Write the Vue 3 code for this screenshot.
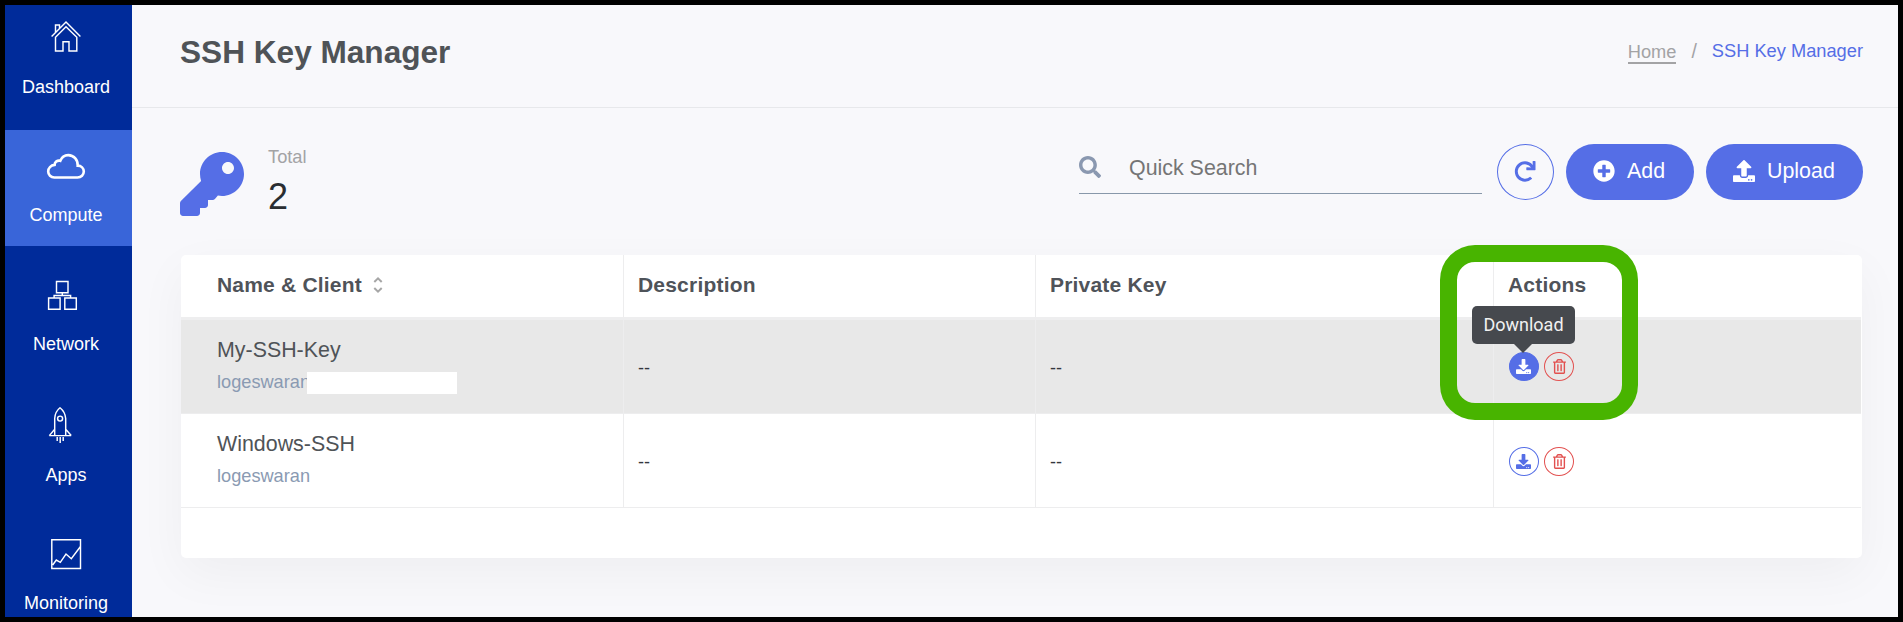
<script setup>
const nav = [
  { id: 'dashboard', label: 'Dashboard' },
  { id: 'compute', label: 'Compute' },
  { id: 'network', label: 'Network' },
  { id: 'apps', label: 'Apps' },
  { id: 'monitoring', label: 'Monitoring' },
]

const keys = [
  { name: 'My-SSH-Key', client: 'logeswaran', description: '--', privateKey: '--', hovered: true },
  { name: 'Windows-SSH', client: 'logeswaran', description: '--', privateKey: '--', hovered: false },
]

const icons = {
  key: 'M512 176.001C512 273.203 433.202 352 336 352c-11.22 0-22.19-1.062-32.827-3.069l-24.012 27.014A23.999 23.999 0 0 1 261.223 384H224v40c0 13.255-10.745 24-24 24h-40v40c0 13.255-10.745 24-24 24H24c-13.255 0-24-10.745-24-24v-78.059c0-6.365 2.529-12.47 7.029-16.971l161.802-161.802C163.108 213.814 160 195.271 160 176 160 78.798 238.797.001 335.999 0 433.488-.001 512 78.511 512 176.001zM336 128c0 26.51 21.49 48 48 48s48-21.49 48-48-21.49-48-48-48-48 21.49-48 48z',
  search: 'M505 442.7L405.3 343c-4.5-4.5-10.6-7-17-7H372c27.6-35.3 44-79.7 44-128C416 93.1 322.9 0 208 0S0 93.1 0 208s93.1 208 208 208c48.3 0 92.7-16.4 128-44v16.3c0 6.4 2.5 12.5 7 17l99.7 99.7c9.4 9.4 24.6 9.4 33.9 0l28.3-28.3c9.4-9.4 9.4-24.6.1-34zM208 336c-70.7 0-128-57.2-128-128 0-70.7 57.2-128 128-128 70.7 0 128 57.2 128 128 0 70.7-57.2 128-128 128z',
  plus: 'M256 8C119 8 8 119 8 256s111 248 248 248 248-111 248-248S393 8 256 8zm144 276c0 6.6-5.4 12-12 12h-92v92c0 6.6-5.4 12-12 12h-56c-6.6 0-12-5.4-12-12v-92h-92c-6.6 0-12-5.4-12-12v-56c0-6.6 5.4-12 12-12h92v-92c0-6.6 5.4-12 12-12h56c6.6 0 12 5.4 12 12v92h92c6.6 0 12 5.4 12 12v56z',
  upload: 'M296 384h-80c-13.3 0-24-10.7-24-24V192h-87.7c-17.8 0-26.7-21.5-14.1-34.1L242.3 5.7c7.5-7.5 19.8-7.5 27.3 0l152.2 152.2c12.6 12.6 3.7 34.1-14.1 34.1H320v168c0 13.3-10.7 24-24 24zm216-8v112c0 13.3-10.7 24-24 24H24c-13.3 0-24-10.7-24-24V376c0-13.3 10.7-24 24-24h136v8c0 30.9 25.1 56 56 56h80c30.9 0 56-25.1 56-56v-8h136c13.3 0 24 10.7 24 24zm-124 88c0-11-9-20-20-20s-20 9-20 20 9 20 20 20 20-9 20-20zm64 0c0-11-9-20-20-20s-20 9-20 20 9 20 20 20 20-9 20-20z',
  download: 'M216 0h80c13.3 0 24 10.7 24 24v168h87.7c17.8 0 26.7 21.5 14.1 34.1L269.7 378.3c-7.5 7.5-19.8 7.5-27.3 0L90.1 226.1c-12.6-12.6-3.7-34.1 14.1-34.1H192V24c0-13.3 10.7-24 24-24zm296 376v112c0 13.3-10.7 24-24 24H24c-13.3 0-24-10.7-24-24V376c0-13.3 10.7-24 24-24h146.7l49 49c20.1 20.1 52.5 20.1 72.6 0l49-49H488c13.3 0 24 10.7 24 24zm-124 88c0-11-9-20-20-20s-20 9-20 20 9 20 20 20 20-9 20-20zm64 0c0-11-9-20-20-20s-20 9-20 20 9 20 20 20 20-9 20-20z',
  redo: 'M500.33 0h-47.41a12 12 0 0 0-12 12.57l4 82.76A247.42 247.42 0 0 0 256 8C119.34 8 7.9 119.53 8 256.19 8.1 393.07 119.1 504 256 504a247.1 247.1 0 0 0 166.18-63.91 12 12 0 0 0 .48-17.43l-34-34a12 12 0 0 0-16.38-.55A176 176 0 1 1 402.1 157.8l-101.53-4.87a12 12 0 0 0-12.57 12v47.41a12 12 0 0 0 12 12h200.33a12 12 0 0 0 12-12V12a12 12 0 0 0-12-12z',
  trash: 'M268 416h24a12 12 0 0 0 12-12V188a12 12 0 0 0-12-12h-24a12 12 0 0 0-12 12v216a12 12 0 0 0 12 12zM432 80h-82.41l-34-56.7A48 48 0 0 0 274.41 0H173.59a48 48 0 0 0-41.16 23.3L98.41 80H16A16 16 0 0 0 0 96v16a16 16 0 0 0 16 16h16v336a48 48 0 0 0 48 48h288a48 48 0 0 0 48-48V128h16a16 16 0 0 0 16-16V96a16 16 0 0 0-16-16zM171.84 50.91A6 6 0 0 1 177 48h94a6 6 0 0 1 5.15 2.91L293.61 80H154.39zM368 464H80V128h288zm-212-48h24a12 12 0 0 0 12-12V188a12 12 0 0 0-12-12h-24a12 12 0 0 0-12 12v216a12 12 0 0 0 12 12z',
}
</script>

<template>
  <div class="app">
    <nav class="sidebar">
      <a v-for="item in nav" :key="item.id" class="nav-item" :class="item.id">
        <svg class="nav-icon" viewBox="0 0 40 40">
          <g v-if="item.id === 'dashboard'">
            <path d="M5.6 18.4 20 4 34.4 18.4M9.5 14.5V7h4v3.8M9.5 19.2V33h7.5V23.8h6V33h7.8V19.2L20 8.8Z" />
          </g>
          <g v-else-if="item.id === 'compute'" class="thick">
            <path d="M8.3 32.5H31.5C35.2 32.5 37.8 29.8 37.8 26.6C37.8 23.2 35.2 20.6 31.7 20.6C31.9 14.8 27.8 10.1 22.2 10.1C18.3 10.1 15.7 12.2 14.3 15.8C11.5 14.9 8.6 17 8.6 19.9C4.8 20.4 2.2 23.1 2.2 26.4C2.2 29.8 4.9 32.5 8.3 32.5Z" />
          </g>
          <g v-else-if="item.id === 'network'">
            <path d="M10.5 6.5h11.5v11.2h-11.5zM2.6 23h11.5v11.3H2.6zM18.8 23h11.5v11.3H18.8zM16.3 17.7v2.8M8.1 23v-2.5h16.5V23" />
          </g>
          <g v-else-if="item.id === 'apps'">
            <path d="M8.7 29.6V12.5C9 7.8 11.2 4 14 1.8C16.8 4 19.3 7.8 19.7 12.5V29.6M3.3 29.6H25.2M8.7 23.3 3.3 29.6M19.7 23.3l5.5 6.3M11.2 31v4M14.2 31v6M17.2 31v4" />
            <circle cx="14.1" cy="12.6" r="2.5" />
          </g>
          <g v-else>
            <path d="M5.8 5.8h28.7v28.6H5.8zM6.7 31 10.3 26 14.3 28.3 20 20 25.3 24.7 34.3 12.7" />
          </g>
        </svg>
        <span class="nav-label">{{ item.label }}</span>
      </a>
    </nav>

    <main class="main">
      <header class="header">
        <h1>SSH Key Manager</h1>
        <div class="crumbs">
          <a class="home">Home</a>
          <span class="slash">/</span>
          <span class="here">SSH Key Manager</span>
        </div>
      </header>

      <section class="toolbar">
        <svg class="key" viewBox="0 0 512 512"><path :d="icons.key" /></svg>
        <div class="total">
          <span class="total-label">Total</span>
          <span class="total-value">2</span>
        </div>
        <div class="search">
          <svg viewBox="0 0 512 512"><path :d="icons.search" /></svg>
          <span>Quick Search</span>
        </div>
        <button class="refresh"><svg viewBox="0 0 512 512"><path :d="icons.redo" /></svg></button>
        <button class="pill add"><svg viewBox="0 0 512 512"><path :d="icons.plus" /></svg>Add</button>
        <button class="pill upload"><svg viewBox="0 0 512 512"><path :d="icons.upload" /></svg>Upload</button>
      </section>

      <section class="card">
        <div class="row head">
          <div class="cell first">
            Name &amp; Client
            <svg class="sort" viewBox="0 0 10 16"><path d="M1.3 5 5 1.4 8.7 5M1.3 11 5 14.6 8.7 11" /></svg>
          </div>
          <div class="cell">Description</div>
          <div class="cell">Private Key</div>
          <div class="cell">Actions</div>
        </div>
        <div v-for="k in keys" :key="k.name" class="row body" :class="{ hovered: k.hovered }">
          <div class="cell first names">
            <span class="name">{{ k.name }}</span>
            <span class="client">{{ k.client }}<i v-if="k.hovered" class="mask"></i></span>
          </div>
          <div class="cell dash">{{ k.description }}</div>
          <div class="cell dash">{{ k.privateKey }}</div>
          <div class="cell actions">
            <button class="round blue">
              <svg viewBox="0 0 512 512"><path :d="icons.download" /></svg>
              <span v-if="k.hovered" class="tooltip">Download</span>
            </button>
            <button class="round red">
              <svg viewBox="0 0 448 512"><path :d="icons.trash" /></svg>
            </button>
            <i v-if="k.hovered" class="highlight"></i>
          </div>
        </div>
      </section>
    </main>
  </div>
</template>

<style>
body {
  margin: 0;
  overflow: hidden;
}
</style>

<style scoped>
.app {
  box-sizing: border-box;
  width: 1903px;
  height: 622px;
  border: 5px solid #000;
  display: flex;
  overflow: hidden;
  background: #f8f8fb;
  font-family: "Liberation Sans", Arial, sans-serif;
  font-size: 18px;
  color: #495057;
}
button {
  box-sizing: border-box;
  margin: 0;
  padding: 0;
  font-family: inherit;
}
svg {
  display: block;
  flex: none;
  fill: currentColor;
}

.sidebar {
  width: 127px;
  height: 612px;
  flex: none;
  overflow: hidden;
  background: #002b9a;
}
.nav-item {
  box-sizing: border-box;
  display: flex;
  flex-direction: column;
  align-items: center;
  gap: 19px;
  padding-right: 5px;
  color: #fff;
}
.nav-item.dashboard { height: 125px; padding-top: 13px; }
.nav-item.compute { height: 116px; padding-top: 15px; gap: 20px; background: #3965d9; }
.nav-item.network { padding-top: 29px; }
.nav-item.apps { padding-top: 52px; }
.nav-item.monitoring { padding-top: 49px; }
.nav-icon {
  width: 40px;
  height: 40px;
  fill: none;
  stroke: #fff;
  stroke-width: 1.45;
}
.nav-icon .thick { stroke-width: 2.6; }
.nav-label {
  line-height: 20px;
  white-space: nowrap;
}

.main {
  flex: 1;
  min-width: 0;
  display: flex;
  flex-direction: column;
}
.header {
  box-sizing: border-box;
  height: 103px;
  flex: none;
  border-bottom: 1px solid #e7e8eb;
  padding: 30px 35px 0 48px;
  display: flex;
  justify-content: space-between;
}
h1 {
  margin: 0;
  font-size: 31.6px;
  line-height: 35px;
  font-weight: 700;
  color: #4f5357;
}
.crumbs {
  display: flex;
  padding-top: 6px;
  font-size: 18.25px;
  line-height: 20px;
  color: #a3a3a5;
}
.home {
  height: 20px;
  margin-top: 1px;
  border-bottom: 2px solid #a3a3a5;
}
.slash {
  margin: 0 15px;
  font-size: 19.5px;
}
.here { color: #556ee6; }

.toolbar {
  display: flex;
  align-items: flex-start;
  height: 111px;
  margin-top: 36px;
  padding: 0 35px 0 48px;
}
.key {
  width: 64px;
  height: 64px;
  margin-top: 8px;
  color: #556ee6;
}
.total {
  display: flex;
  flex-direction: column;
  margin: 3px 0 0 24px;
}
.total-label {
  line-height: 20px;
  font-size: 18.25px;
  color: #a3a3a5;
}
.total-value {
  margin-top: 10px;
  font-size: 36px;
  line-height: 40px;
  color: #2a2d31;
}
.search {
  box-sizing: border-box;
  width: 403px;
  height: 50px;
  margin-left: auto;
  border-bottom: 1px solid #8898aa;
  display: flex;
  color: #8a98b0;
}
.search svg {
  width: 22px;
  height: 22px;
  margin-top: 12px;
}
.search span {
  margin: 12px 0 0 28px;
  font-size: 21.4px;
  line-height: 24px;
  color: #757575;
}
.refresh {
  width: 57px;
  height: 56px;
  margin-left: 15px;
  border: 1px solid #556ee6;
  border-radius: 50%;
  background: transparent;
  color: #556ee6;
  display: flex;
  align-items: center;
  justify-content: center;
}
.refresh svg {
  width: 22px;
  height: 21px;
  margin: 0 1px 2px 0;
}
.pill {
  height: 56px;
  margin-left: 12px;
  padding-left: 27px;
  padding-bottom: 2px;
  border: 0;
  border-radius: 28px;
  background: #556ee6;
  color: #fff;
  display: flex;
  align-items: center;
  font-size: 21.4px;
}
.pill svg {
  width: 22px;
  height: 22px;
  margin-right: 12px;
}
.add { width: 128px; }
.upload { width: 157px; }

.card {
  width: 1681px;
  height: 303px;
  margin-left: 49px;
  border-radius: 5px;
  background: #fff;
  box-shadow: 0 16px 50px rgba(4, 9, 20, 0.045);
}
.row {
  display: grid;
  grid-template-columns: 442px 412px 458px 368px;
  width: 1680px;
  box-sizing: border-box;
}
.head {
  height: 65px;
  border-bottom: 3px solid #eeeeef;
  font-size: 21px;
  font-weight: 700;
  letter-spacing: 0.2px;
  color: #4f5359;
}
.cell {
  box-sizing: border-box;
  padding-left: 14px;
  border-left: 1px solid #ededee;
}
.cell.first {
  padding-left: 36px;
  border-left: 0;
}
.head .cell {
  display: flex;
  padding-top: 18px;
  line-height: 24px;
}
.sort {
  width: 10px;
  height: 16px;
  margin: 4px 0 0 11px;
  fill: none;
  stroke: #a6a6a6;
  stroke-width: 2;
}
.body {
  height: 94px;
  border-bottom: 1px solid #ededee;
}
.hovered { background: #e8e8e8; }
.names {
  display: flex;
  flex-direction: column;
  align-items: flex-start;
}
.name {
  margin-top: 18px;
  font-size: 21.4px;
  line-height: 24px;
  color: #4f5357;
}
.client {
  position: relative;
  margin-top: 10px;
  font-size: 18.2px;
  line-height: 20px;
  color: #8a9ab2;
}
.mask {
  position: absolute;
  left: 90px;
  top: 0;
  width: 150px;
  height: 22px;
  background: #fff;
}
.dash {
  display: flex;
  align-items: center;
  padding-top: 3px;
  color: #33373e;
}
.cell.actions {
  position: relative;
  display: flex;
  align-items: center;
  gap: 5px;
  padding-left: 15px;
  padding-top: 2px;
}
.hovered .cell.actions { padding-top: 0; }
.round {
  position: relative;
  width: 30px;
  height: 29px;
  border-radius: 50%;
  background: transparent;
  display: flex;
  align-items: center;
  justify-content: center;
}
.blue { border: 1px solid #556ee6; color: #556ee6; }
.red { border: 1px solid #e2504f; color: #e2504f; }
.blue svg { width: 15px; height: 15px; margin-right: 1px; }
.red svg { width: 13px; height: 15px; }
.hovered .blue { background: #556ee6; color: #fff; }
.tooltip {
  position: absolute;
  z-index: 3;
  left: -38px;
  top: -47px;
  width: 103px;
  height: 38px;
  border-radius: 5px;
  background: #46494e;
  color: #f1f1f1;
  font: 18px/37px Roboto, sans-serif;
  text-align: center;
}
.tooltip::after {
  content: "";
  position: absolute;
  left: 42px;
  top: 38px;
  border: 9px solid transparent;
  border-top-color: #46494e;
  border-bottom: 0;
}
.highlight {
  position: absolute;
  z-index: 2;
  box-sizing: border-box;
  left: -54px;
  top: -75px;
  width: 198px;
  height: 175px;
  border: 17px solid #48b400;
  border-right-width: 16px;
  border-radius: 35px;
  pointer-events: none;
}
</style>
